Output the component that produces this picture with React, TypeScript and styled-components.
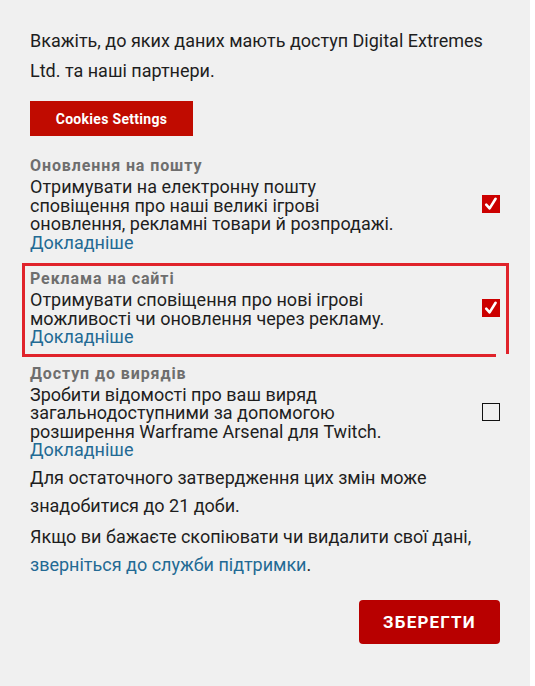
import styled, { createGlobalStyle } from 'styled-components'

const GlobalStyle = createGlobalStyle`
  html, body {
    margin: 0;
    padding: 0;
    background: #ffffff;
  }
  body {
    font-family: Roboto, 'Liberation Sans', Arial, sans-serif;
  }
`

const Panel = styled.div`
  width: 530px;
  min-height: 686px;
  box-sizing: border-box;
  padding: 26px 30px 40px;
  background: #f0f0f0;
  color: #1e1e1e;
`

const Intro = styled.p`
  margin: 0;
  font-size: 18px;
  line-height: 30px;
`

const CookiesButton = styled.button`
  display: block;
  margin-top: 15px;
  width: 163px;
  height: 35px;
  border: none;
  background: #c00b00;
  color: #ffffff;
  font-family: Roboto, sans-serif;
  font-size: 14px;
  font-weight: 700;
  letter-spacing: 0.3px;
  cursor: pointer;
`

const SectionList = styled.div`
  margin-top: 20px;
  display: flex;
  flex-direction: column;
  gap: 17px;
`

const Section = styled.div`
  position: relative;
  display: flex;
  align-items: center;
  justify-content: space-between;
`

const Highlight = styled.div`
  position: absolute;
  top: -6px;
  left: -8px;
  right: -9px;
  bottom: -7px;
  border: 3px solid #e0232b;
  border-bottom: none;
  pointer-events: none;

  &::after {
    content: '';
    position: absolute;
    left: -3px;
    right: 10px;
    bottom: -3px;
    height: 3px;
    background: #e0232b;
  }
`

const TextColumn = styled.div`
  width: 370px;
`

const Heading = styled.div`
  font-size: 16px;
  font-weight: 700;
  line-height: 20px;
  letter-spacing: 0.9px;
  color: #6e6e6e;
`

const Desc = styled.div`
  margin-top: 2px;
  font-size: 18px;
  line-height: 18.5px;
`

const MoreLink = styled.a`
  display: block;
  color: #236a94;
  text-decoration: none;
`

const Box = styled.span<{ $checked: boolean }>`
  flex: none;
  width: 18px;
  height: 18px;
  box-sizing: border-box;
  display: flex;
  align-items: center;
  justify-content: center;
  background: ${({ $checked }) => ($checked ? '#cc0000' : 'transparent')};
  border: ${({ $checked }) => ($checked ? 'none' : '1.5px solid #111')};
`

const Note = styled.p`
  margin: 4px 0 0;
  font-size: 18px;
  line-height: 28px;

  & + & {
    margin-top: 3px;
  }
`

const InlineLink = styled.a`
  color: #236a94;
  text-decoration: none;
`

const SaveRow = styled.div`
  display: flex;
  justify-content: flex-end;
  margin-top: 21px;
`

const SaveButton = styled.button`
  width: 141px;
  height: 44px;
  border: none;
  border-radius: 4px;
  background: #b80000;
  color: #ffffff;
  font-family: Roboto, sans-serif;
  font-size: 17px;
  font-weight: 700;
  letter-spacing: 1.2px;
  cursor: pointer;
`

function Checkbox({ checked }: { checked: boolean }) {
  return (
    <Box $checked={checked}>
      {checked && (
        <svg width="18" height="18" viewBox="0 0 18 18">
          <path
            d="M4.2 9.6 L7.6 13.4 L13.6 3.8"
            fill="none"
            stroke="#ffffff"
            strokeWidth="2.6"
            strokeLinecap="round"
            strokeLinejoin="round"
          />
        </svg>
      )}
    </Box>
  )
}

const sections = [
  {
    title: 'Оновлення на пошту',
    text: 'Отримувати на електронну пошту сповіщення про наші великі ігрові оновлення, рекламні товари й розпродажі.',
    checked: true,
    marked: false,
  },
  {
    title: 'Реклама на сайті',
    text: 'Отримувати сповіщення про нові ігрові можливості чи оновлення через рекламу.',
    checked: true,
    marked: true,
  },
  {
    title: 'Доступ до вирядів',
    text: 'Зробити відомості про ваш виряд загальнодоступними за допомогою розширення Warframe Arsenal для Twitch.',
    checked: false,
    marked: false,
  },
]

export default function App() {
  return (
    <>
      <GlobalStyle />
      <Panel>
        <Intro>
          Вкажіть, до яких даних мають доступ Digital Extremes Ltd. та наші партнери.
        </Intro>
        <CookiesButton>Cookies Settings</CookiesButton>

        <SectionList>
          {sections.map((s) => (
            <Section key={s.title}>
              <TextColumn>
                <Heading>{s.title}</Heading>
                <Desc>
                  {s.text}
                  <MoreLink href="#">Докладніше</MoreLink>
                </Desc>
              </TextColumn>
              <Checkbox checked={s.checked} />
              {s.marked && <Highlight />}
            </Section>
          ))}
        </SectionList>

        <Note>Для остаточного затвердження цих змін може знадобитися до 21 доби.</Note>
        <Note>
          Якщо ви бажаєте скопіювати чи видалити свої дані,{' '}
          <InlineLink href="#">зверніться до служби підтримки</InlineLink>.
        </Note>

        <SaveRow>
          <SaveButton>ЗБЕРЕГТИ</SaveButton>
        </SaveRow>
      </Panel>
    </>
  )
}
